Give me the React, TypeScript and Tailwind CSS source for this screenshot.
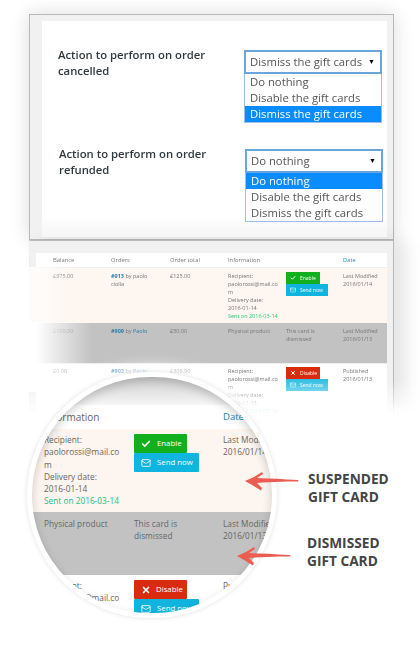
import React from 'react'
import { Check, Mail, X } from 'lucide-react'

const options = ['Do nothing', 'Disable the gift cards', 'Dismiss the gift cards']

function SelectRow({ label, value, className }: { label: string; value: string; className?: string }) {
  return (
    <div className={`flex items-start ${className ?? ''}`}>
      <div className="-mt-[3px] w-[202px] pl-4 text-[11.3px] leading-[15.5px] font-semibold text-[#2f3a40]">
        <p className="w-[160px]">{label}</p>
      </div>
      <div className="w-[138px]">
        <div className="flex h-[24px] items-center justify-between border-2 border-[#6aa6de] bg-white pr-[5px] pl-[4px] text-[11.3px] text-[#555]">
          <span>{value}</span>
          <span className="text-[7px] text-black">▼</span>
        </div>
        <ul className="border border-t-0 border-[#9dbce6] text-[11.3px] leading-[16px] text-[#555]">
          {options.map((o) => (
            <li key={o} className={o === value ? 'bg-[#0a8cff] pl-[5px] text-white' : 'pl-[5px]'}>
              {o}
            </li>
          ))}
        </ul>
      </div>
    </div>
  )
}

function Cell({ lines, className }: { lines: React.ReactNode[]; className?: string }) {
  return (
    <div className={`whitespace-nowrap ${className ?? ''}`}>
      {lines.map((l, i) => (
        <div key={i}>{l}</div>
      ))}
    </div>
  )
}

function SmallButton({ color, icon, text, width }: { color: string; icon: React.ReactNode; text: string; width: string }) {
  return (
    <div className={`flex h-[12px] items-center gap-[4px] pl-[4px] text-[5px] leading-none text-white ${color} ${width}`}>
      {icon}
      {text}
    </div>
  )
}

function Table() {
  const row = 'grid grid-cols-[58px_59px_58px_58px_57px_1fr] pl-[17px] text-[5.5px] leading-[8px] text-[#777]'
  const link = 'text-[#2a7fa8]'
  return (
    <div className="bg-white">
      <div className={`${row} h-[15px] items-center border-b border-[#eee] text-[5.8px]`}>
        <span>Balance</span>
        <span>Orders</span>
        <span>Order total</span>
        <span>Information</span>
        <span />
        <span className="text-[#2a8ab8]">Date</span>
      </div>
      <div className={`${row} h-[55px] bg-[#fdf6f1] pt-[4px]`}>
        <span>£875.00</span>
        <span className="pr-3">
          <b className={link}>#913</b> by paolo ciolla
        </span>
        <span>£125.00</span>
        <Cell
          lines={['Recipient:', 'paolorossi@mail.co', 'm', 'Delivery date:', '2016-01-14', <span className="text-[#2ecc71]">Sent on 2016-03-14</span>]}
        />
        <div>
          <SmallButton color="bg-[#12b01f]" width="w-[34px]" icon={<Check size={6} strokeWidth={4} />} text="Enable" />
          <SmallButton color="bg-[#0fb5de]" width="w-[42px]" icon={<Mail size={6} />} text="Send now" />
        </div>
        <Cell lines={['Last Modified', '2016/01/14']} />
      </div>
      <div className={`${row} h-[40px] bg-[#c2c2c2] pt-[4px]`}>
        <span>£100.00</span>
        <span>
          <b className={link}>#909</b> by <span className={link}>Paolo</span>
        </span>
        <span>£50.00</span>
        <span>Physical product</span>
        <span className="pr-5">This card is dismissed</span>
        <Cell lines={['Last Modified', '2016/01/13']} />
      </div>
      <div className={`${row} h-[52px] border-t border-[#eee] pt-[3px]`}>
        <span>£0.00</span>
        <span>
          <b className={link}>#902</b> by <span className={link}>Paolo</span>
        </span>
        <span>£308.90</span>
        <Cell lines={['Recipient:', 'paolorossi@mail.co', 'm', 'Delivery date:', '2016-01-13', <span className="text-[#2ecc71]">Sent on 2016-03-14</span>]} />
        <div>
          <SmallButton color="bg-[#d92b10]" width="w-[34px]" icon={<X size={6} strokeWidth={4} />} text="Disable" />
          <SmallButton color="bg-[#33bfe3]" width="w-[42px]" icon={<Mail size={6} />} text="Send now" />
        </div>
        <Cell lines={['Published', '2016/01/13']} />
      </div>
    </div>
  )
}

function BigButton({ color, width, icon, text, gap }: { color: string; width: string; icon: React.ReactNode; text: string; gap: string }) {
  return (
    <div className={`flex h-[19px] items-center rounded-[1px] pl-[7px] text-[7.8px] leading-none font-medium text-white ${gap} ${color} ${width}`}>
      {icon}
      {text}
    </div>
  )
}

function Magnifier() {
  const row = 'grid grid-cols-[90px_89px_120px] pl-[12px] text-[8.3px] leading-[12.3px] text-[#666]'
  return (
    <div className="absolute top-[372px] left-[27px] h-[246px] w-[250px] rounded-full bg-white p-[5px] shadow-[0_0_5px_rgba(0,0,0,0.12),0_0_14px_6px_rgba(255,255,255,0.9)]">
      <div className="relative h-full w-full overflow-hidden rounded-full bg-[#f4f4f4]">
        <div className="h-[28px] bg-gradient-to-b from-[#cfcfcf] to-[#f6f6f6]" />
        <div className={`${row} h-[24px] items-center bg-white text-[#555]`}>
          <span className="text-[10px]">Information</span>
          <span />
          <span className="text-[9.5px] text-[#1f87ad]">Date</span>
        </div>
        <div className={`${row} h-[83px] bg-[#fdf5ef] pt-[5px]`}>
          <Cell lines={['Recipient:', 'paolorossi@mail.co', 'm', 'Delivery date:', '2016-01-14', <span className="text-[#16c47a]">Sent on 2016-03-14</span>]} />
          <div>
            <BigButton color="bg-[#12b01f]" width="w-[53px]" gap="gap-[6px]" icon={<Check size={10} strokeWidth={4} />} text="Enable" />
            <BigButton color="bg-[#0fb5de]" width="w-[65px]" gap="gap-[6px]" icon={<Mail size={10} />} text="Send now" />
          </div>
          <Cell lines={['Last Modified', '2016/01/14']} />
        </div>
        <div className={`${row} h-[63px] bg-[#c2c2c2] pt-[6px]`}>
          <span>Physical product</span>
          <span className="pr-8">This card is dismissed</span>
          <Cell lines={['Last Modified', '2016/01/13']} />
        </div>
        <div className={`${row} h-[50px] bg-white pt-[5px]`}>
          <Cell lines={['Recipient:', 'paolorossi@mail.co']} />
          <div>
            <BigButton color="bg-[#d92b10]" width="w-[53px]" gap="gap-[5px]" icon={<X size={10} strokeWidth={4} />} text="Disable" />
            <BigButton color="bg-[#0fb5de]" width="w-[65px]" gap="gap-[6px]" icon={<Mail size={10} />} text="Send now" />
          </div>
          <Cell lines={['Published']} />
        </div>
        <div className="absolute inset-0 rounded-full shadow-[inset_0_4px_10px_rgba(0,0,0,0.18)]" />
      </div>
    </div>
  )
}

function Arrow({ className }: { className: string }) {
  return (
    <svg className={`blur-[0.4px] ${className}`} width="54" height="19" viewBox="0 0 54 19" fill="#ea5d50">
      <path d="M0 9 L9 5 L17 0 L18 2 L12 6 L22 6.5 L32 6.8 L42 7.4 L53 8 L53.5 9.6 L42 9.4 L30 10 L18 10.4 L12 11 L17 16 L16 18.5 L8 13.5 Z" />
    </svg>
  )
}

function Note({ className, lines }: { className: string; lines: string[] }) {
  return (
    <div className={`absolute text-[13.7px] leading-[17.5px] font-bold text-[#444] ${className}`}>
      {lines.map((l) => (
        <div key={l}>{l}</div>
      ))}
    </div>
  )
}

export default function App() {
  return (
    <div className="relative h-[650px] w-[420px] overflow-hidden bg-white font-['Open_Sans',sans-serif]">
      <div className="pt-[14px] pl-[29px]">
        <div className="h-[226px] w-[365px] border border-[#b8b8b8] bg-[#f1f1f1] pt-[6px] pl-[12px] shadow-[0_0_18px_rgba(0,0,0,0.14)]">
          <div className="flex h-[216px] w-[345px] flex-col gap-[26px] bg-gradient-to-b from-white from-90% to-[#f5f5f5] pt-[29px] blur-[0.3px]">
            <SelectRow label="Action to perform on order cancelled" value="Dismiss the gift cards" />
            <SelectRow label="Action to perform on order refunded" value="Do nothing" className="pl-px" />
          </div>
        </div>
        <div className="h-[180px] w-[365px] border border-[#b8b8b8] border-l-[#eeeeee] bg-[#f1f1f1] px-[6px] pt-[12px] shadow-[12px_0_16px_rgba(0,0,0,0.1)]">
          <div className="blur-[0.5px]">
            <Table />
          </div>
        </div>
      </div>

      {/* fades that melt the table into the page */}
      <div className="absolute top-[267px] left-[22px] h-[55px] w-[53px] bg-gradient-to-r from-white to-transparent" />
      <div className="absolute top-[322px] left-[22px] h-[70px] w-[70px] bg-gradient-to-r from-white from-20% to-transparent" />
      <div className="absolute top-[380px] left-0 h-[35px] w-[420px] bg-gradient-to-b from-transparent to-white" />
      <div className="absolute top-[415px] left-0 h-[235px] w-[420px] bg-white" />

      <Magnifier />

      <Arrow className="absolute top-[472px] left-[245px]" />
      <Arrow className="absolute top-[547px] left-[237px]" />
      <Note className="top-[470px] left-[308px]" lines={['SUSPENDED', 'GIFT CARD']} />
      <Note className="top-[534px] left-[307px]" lines={['DISMISSED', 'GIFT CARD']} />
    </div>
  )
}
